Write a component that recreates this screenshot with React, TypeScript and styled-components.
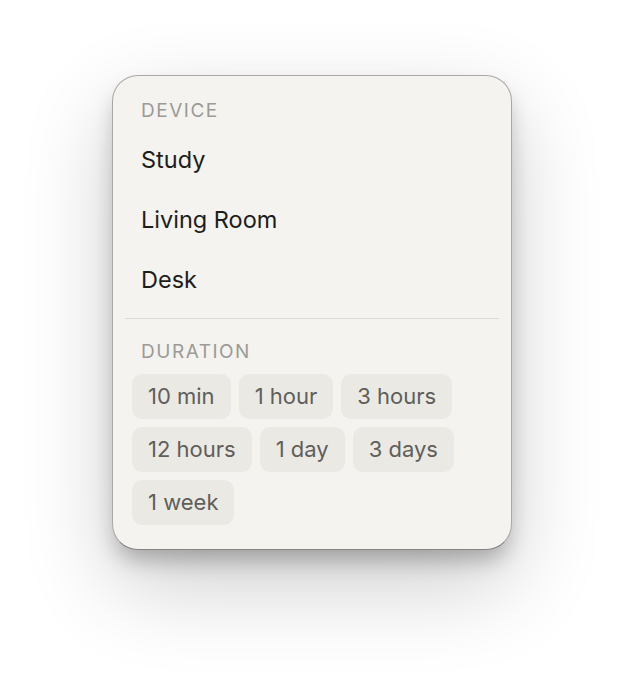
import styled, { createGlobalStyle } from "styled-components";

const DEVICES = ["Study", "Living Room", "Desk"];
const DURATIONS = ["10 min", "1 hour", "3 hours", "12 hours", "1 day", "3 days", "1 week"];

const GlobalStyle = createGlobalStyle`
  html,
  body {
    margin: 0;
    background: #ffffff;
    font-family: Inter, "Noto Sans", sans-serif;
  }
`;

export default function App() {
  return (
    <>
      <GlobalStyle />
      <Page>
        <Menu>
          <Label>Device</Label>
          {DEVICES.map((device) => (
            <Item key={device}>{device}</Item>
          ))}
          <Divider />
          <Label $spaced>Duration</Label>
          <Chips>
            {DURATIONS.map((duration) => (
              <Chip key={duration}>{duration}</Chip>
            ))}
          </Chips>
        </Menu>
      </Page>
    </>
  );
}

const Page = styled.div`
  display: flex;
  justify-content: center;
  align-items: flex-start;
  padding-top: 75px;
  min-height: 698px;
  box-sizing: border-box;
`;

const Menu = styled.div`
  width: 400px;
  box-sizing: border-box;
  padding: 12px;
  background: #f4f3ef;
  border: 1px solid #a9a8a5;
  border-bottom-color: #858481;
  border-radius: 26px;
  box-shadow: 0 14px 22px -4px rgba(0, 0, 0, 0.26),
    0 34px 90px rgba(0, 0, 0, 0.2);
`;

const Label = styled.div<{ $spaced?: boolean }>`
  padding: ${({ $spaced }) => ($spaced ? "21px 16px 10px" : "11px 16px 7px")};
  font-size: 19px;
  line-height: 24px;
  letter-spacing: 0.08em;
  text-transform: uppercase;
  color: #9c9a96;
`;

const Item = styled.div`
  padding: 0 16px;
  height: 60px;
  line-height: 60px;
  font-size: 23.5px;
  color: #1d1d1b;
  border-radius: 12px;
  cursor: pointer;
`;

const Divider = styled.div`
  height: 1px;
  margin-top: 8px;
  background: #dcdad5;
`;

const Chips = styled.div`
  display: flex;
  flex-wrap: wrap;
  gap: 8px;
  padding: 0 7px 12px;
`;

const Chip = styled.button`
  height: 45px;
  padding: 0 16px;
  border: none;
  border-radius: 10px;
  background: #eae9e4;
  font-family: inherit;
  font-size: 22px;
  line-height: 45px;
  color: #5f5e5a;
  cursor: pointer;
`;
